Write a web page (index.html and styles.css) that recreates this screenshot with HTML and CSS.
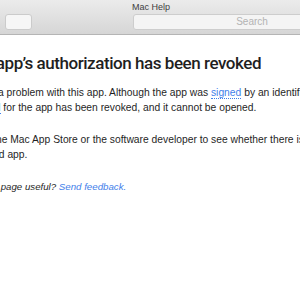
FILE: index.html
```html
<!DOCTYPE html>
<html lang="en">
<head>
    <meta charset="UTF-8">
    <meta name="viewport" content="width=device-width, initial-scale=1.0">
    <title>Mac Help</title>
    <link rel="stylesheet" href="styles.css">
</head>
<body>
    <div class="window">
        <div class="toolbar">
            <div class="window-title">Mac Help</div>
            <div class="toolbar-row">
                <div class="nav-button"></div>
                <div class="search-field">Search</div>
            </div>
        </div>

        <div class="content">
            <div class="article">
                <h1 class="title">This app’s authorization has been revoked</h1>
                <p>There’s a problem with this app. Although the app was <a class="glossary" href="#">signed</a> by an identified developer, the<br><a class="glossary" href="#">approval</a> for the app has been revoked, and it cannot be opened.</p>
                <p>Check the Mac App Store or the software developer to see whether there is a newer version of the<br>upgraded app.</p>
                <p class="feedback">Was this page useful? <a href="#">Send feedback.</a></p>
            </div>
        </div>
    </div>
</body>
</html>
```

FILE: styles.css
```css
body {
    margin: 0;
    font-family: "Liberation Sans", Arial, sans-serif;
    background: #fff;
    color: #1f1f1f;
}

.window {
    width: 300px;
    height: 300px;
    overflow: hidden;
}

.toolbar {
    height: 35px;
    background: linear-gradient(#ebebeb, #d6d6d6);
    border-bottom: 1px solid #b5b5b5;
    box-sizing: border-box;
}

.window-title {
    font-size: 9px;
    color: #404040;
    padding-top: 2px;
    padding-left: 132px;
    height: 12px;
}

.toolbar-row {
    display: flex;
    gap: 101px;
    padding-left: 5px;
}

.nav-button {
    flex: none;
    width: 27px;
    height: 16px;
    background: #f6f6f6;
    border: 1px solid #cbcbcb;
    border-radius: 3px;
    box-sizing: border-box;
}

.search-field {
    flex: none;
    width: 238px;
    height: 16px;
    background: #f4f4f4;
    border: 1px solid #cdcdcd;
    border-radius: 3px;
    box-sizing: border-box;
    font-size: 10px;
    line-height: 14px;
    color: #b3b3b3;
    text-align: center;
}

.content {
    overflow: hidden;
}

.article {
    width: 400px;
    margin-left: -39px;
    padding-top: 18px;
}

.title {
    font-family: Roboto, "Liberation Sans", sans-serif;
    font-size: 17px;
    font-weight: 500;
    letter-spacing: -0.45px;
    margin: 0 0 12px;
    white-space: nowrap;
}

.article p {
    font-size: 10.3px;
    line-height: 15px;
    margin: 0 0 17px;
    white-space: nowrap;
}

.article p.feedback {
    font-size: 9.7px;
    font-style: italic;
}

.article a {
    color: #3f80ea;
    text-decoration: none;
}

.article a.glossary {
    border-bottom: 1px dotted #3f80ea;
}
```
